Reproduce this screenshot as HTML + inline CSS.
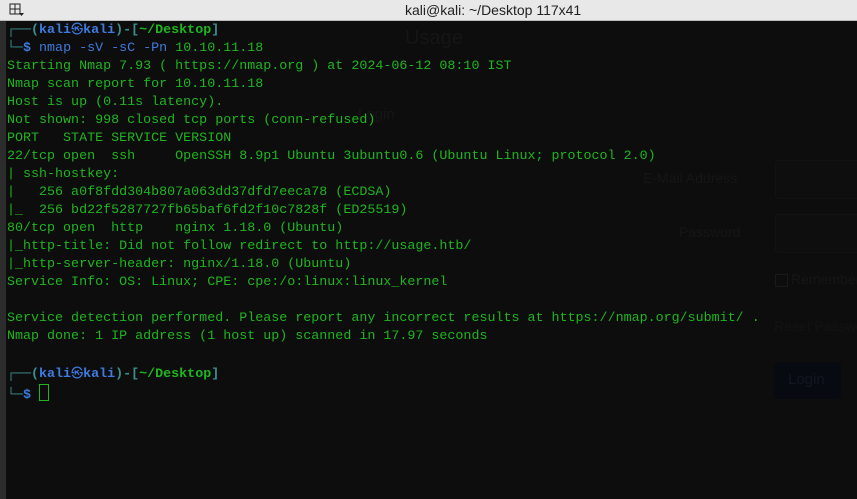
<html><head><style>
body{margin:0;width:857px;height:499px;background:#0d0d0d;overflow:hidden;position:relative;font-family:"Liberation Sans",sans-serif}
#tb{position:absolute;left:0;top:0;width:857px;height:20px;background:#e8e8e8;border-bottom:1px solid #bbb}
#tb .t{position:absolute;left:405px;top:2px;font-size:14px;color:#222}
#lb{position:absolute;left:0;top:21px;width:6px;height:478px;background:#2c2c2c}
pre{position:absolute;left:7px;top:20px;margin:0;font-family:"Liberation Mono","DejaVu Sans Mono","Noto Sans CJK JP",monospace;font-size:13.35px;line-height:18px;color:#1fb51f;font-weight:bold}
.b{color:#3d7be0}.c{color:#3b8f8f}.g{color:#1fb51f}
.gh{position:absolute;color:#161616;font-family:"Liberation Sans",sans-serif;white-space:nowrap}
.cur{display:inline-block;width:8px;height:15px;border:1px solid #1fb51f;vertical-align:-3px}
</style></head><body>
<div class="gh" style="left:405px;top:27px;font-size:20px">Usage</div>
<div class="gh" style="left:358px;top:106px;font-size:15px">Login</div>
<div class="gh" style="left:643px;top:170px;font-size:14px">E-Mail Address</div>
<div class="gh" style="left:679px;top:224px;font-size:14px">Password</div>
<div style="position:absolute;left:775px;top:160px;width:90px;height:37px;background:#0e0e0e;border:1px solid #121212;border-radius:3px"></div>
<div style="position:absolute;left:775px;top:214px;width:90px;height:37px;background:#0e0e0e;border:1px solid #121212;border-radius:3px"></div>
<div style="position:absolute;left:775px;top:274px;width:11px;height:11px;border:1px solid #1a1a1a"></div>
<div class="gh" style="left:791px;top:271px;font-size:14px">Remember</div>
<div class="gh" style="left:774px;top:318px;font-size:14px;color:#131313">Reset Password</div>
<div style="position:absolute;left:774px;top:362px;width:67px;height:37px;background:#070a10;border-radius:3px"></div>
<div class="gh" style="left:788px;top:371px;font-size:15px;color:#121720">Login</div>
<div id="tb"><svg style="position:absolute;left:9px;top:3px" width="16" height="14"><rect x="1" y="1" width="10" height="10" fill="none" stroke="#222"/><line x1="6" y1="1" x2="6" y2="11" stroke="#222"/><line x1="1" y1="6" x2="11" y2="6" stroke="#222"/><path d="M10 10h5l-2.5 3z" fill="#222"/></svg><span class="t">kali@kali: ~/Desktop 117x41</span></div>
<div id="lb"></div>
<pre><span class="c">┌──(</span><span class="b">kali<span style="font-family:'Noto Sans CJK JP',sans-serif;font-size:12px">㉿</span>kali</span><span class="c">)-[</span><span class="g">~/Desktop</span><span class="c">]</span>
<span class="c">└─</span><span class="b">$</span> <span class="b" style="font-weight:normal">nmap -sV -sC -Pn</span> <span style="font-weight:normal">10.10.11.18</span>
<span style="font-weight:normal">Starting Nmap 7.93 ( https://nmap.org ) at 2024-06-12 08:10 IST
Nmap scan report for 10.10.11.18
Host is up (0.11s latency).
Not shown: 998 closed tcp ports (conn-refused)
PORT   STATE SERVICE VERSION
22/tcp open  ssh     OpenSSH 8.9p1 Ubuntu 3ubuntu0.6 (Ubuntu Linux; protocol 2.0)
| ssh-hostkey: 
|   256 a0f8fdd304b807a063dd37dfd7eeca78 (ECDSA)
|_  256 bd22f5287727fb65baf6fd2f10c7828f (ED25519)
80/tcp open  http    nginx 1.18.0 (Ubuntu)
|_http-title: Did not follow redirect to http://usage.htb/
|_http-server-header: nginx/1.18.0 (Ubuntu)
Service Info: OS: Linux; CPE: cpe:/o:linux:linux_kernel

Service detection performed. Please report any incorrect results at https://nmap.org/submit/ .
Nmap done: 1 IP address (1 host up) scanned in 17.97 seconds</span>

<span class="c">┌──(</span><span class="b">kali<span style="font-family:'Noto Sans CJK JP',sans-serif;font-size:12px">㉿</span>kali</span><span class="c">)-[</span><span class="g">~/Desktop</span><span class="c">]</span>
<span class="c">└─</span><span class="b">$</span> <span class="cur"></span></pre>
</body></html>
